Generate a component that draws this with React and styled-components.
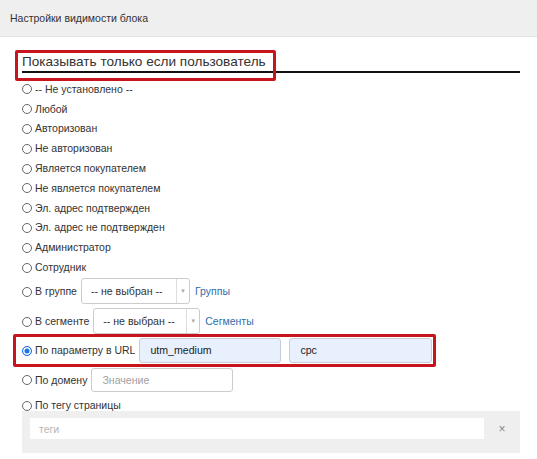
import React from "react";
import styled, { createGlobalStyle } from "styled-components";

const GlobalStyle = createGlobalStyle`
  html, body {
    margin: 0;
    padding: 0;
    background: #ffffff;
    font-family: "Liberation Sans", Arial, sans-serif;
    color: #333333;
  }
`;

const Panel = styled.div`
  width: 537px;
  height: 459px;
  overflow: hidden;
  background: #ffffff;
`;

const Header = styled.div`
  height: 36px;
  display: flex;
  align-items: center;
  padding-left: 10px;
  font-size: 10.5px;
  color: #333;
  background: #efefef;
  border-bottom: 1px solid #e4e4e4;
`;

const Body = styled.div`
  padding: 15px 17px 0 22px;
`;

const Heading = styled.div`
  display: flex;
  height: 19px;
  border-bottom: 2px solid #111;
  font-size: 13.6px;
  line-height: 19px;
  color: #333;
`;

const Marked = styled.span`
  position: relative;
  &::after {
    content: "";
    position: absolute;
    left: -7px;
    right: -10px;
    top: -2px;
    bottom: -10px;
    border: 3px solid #c8151d;
    border-radius: 2px;
    pointer-events: none;
  }
`;

const List = styled.div`
  display: flex;
  flex-direction: column;
  margin-top: 6px;
`;

const Option = styled.label`
  display: flex;
  align-items: ${(p) => p.$align || "center"};
  gap: 3px;
  height: ${(p) => p.$h || 19.8}px;
  font-size: 10.5px;
  color: #333;
  white-space: nowrap;
`;

const Radio = styled.span`
  box-sizing: border-box;
  width: 10px;
  height: 10px;
  border-radius: 50%;
  flex: none;
  border: 1px solid ${(p) => (p.$checked ? "#1a73e8" : "#666")};
  background: ${(p) => (p.$checked ? "#1a73e8" : "#fff")};
  box-shadow: ${(p) => (p.$checked ? "inset 0 0 0 1.5px #fff" : "none")};
  margin-top: 1px;
`;

const SelectRow = styled(Option)`
  height: 29px;
  align-items: flex-start;
  padding-top: 1px;
  & > span:first-child { margin-top: 9px; }
  & > span:nth-child(2) { margin-top: 7px; }
`;

const Select = styled.div`
  box-sizing: border-box;
  width: ${(p) => p.$w}px;
  height: 26px;
  margin-left: 1px;
  display: flex;
  align-items: stretch;
  border: 1px solid #cccccc;
  border-radius: 3px;
  background: #fff;
  font-size: 10.6px;
  color: #333;
`;

const SelectValue = styled.div`
  flex: 1;
  display: flex;
  align-items: center;
  padding-left: 9px;
`;

const SelectArrow = styled.div`
  width: 12px;
  border-left: 1px solid #dddddd;
  display: flex;
  align-items: center;
  justify-content: center;
  color: #aaa;
  font-size: 6px;
`;

const Link = styled.a`
  color: #2f6eac;
  text-decoration: none;
  font-size: 10.5px;
  margin-left: 2px;
  margin-top: 7px;
`;

const Highlight = styled.div`
  display: inline-flex;
  align-self: flex-start;
  align-items: center;
  gap: 3px;
  margin-left: -9px;
  margin-top: -3px;
  padding: 1px 1px 1px 6px;
  border: 3px solid #c8151d;
  border-radius: 2px;
  font-size: 10.5px;
  white-space: nowrap;
`;

const Field = styled.div`
  box-sizing: border-box;
  width: ${(p) => p.$w}px;
  height: ${(p) => p.$h || 25}px;
  margin-left: ${(p) => p.$ml || 0}px;
  display: flex;
  align-items: center;
  padding-left: 10px;
  border: 1px solid ${(p) => (p.$filled ? "#c5ccd6" : "#cccccc")};
  border-radius: 3px;
  background: ${(p) => (p.$filled ? "#e8f0fe" : "#fff")};
  color: ${(p) => (p.$filled ? "#222" : "#a0a0a0")};
  font-size: 10.6px;
`;

const TagBox = styled.div`
  display: flex;
  align-items: center;
  height: 42px;
  padding: 0 8px;
  gap: 8px;
  background: #efefef;
`;

const TagInput = styled.div`
  flex: 1;
  height: 21px;
  margin-top: -6px;
  display: flex;
  align-items: center;
  padding-left: 9px;
  background: #fff;
  color: #b5b5b5;
  font-size: 10.5px;
`;

const Clear = styled.span`
  width: 20px;
  margin-top: -6px;
  color: #888;
  font-size: 12px;
  text-align: center;
`;

const simple = [
  "-- Не установлено --",
  "Любой",
  "Авторизован",
  "Не авторизован",
  "Является покупателем",
  "Не является покупателем",
  "Эл. адрес подтвержден",
  "Эл. адрес не подтвержден",
  "Администратор",
  "Сотрудник",
];

export default function App() {
  return (
    <>
      <GlobalStyle />
      <Panel>
        <Header>Настройки видимости блока</Header>
        <Body>
          <Heading>
            <Marked>Показывать только если пользователь</Marked>
          </Heading>
          <List>
            {simple.map((t) => (
              <Option key={t}>
                <Radio />
                {t}
              </Option>
            ))}
            <SelectRow>
              <Radio />
              <span>В группе</span>
              <Select $w={109}>
                <SelectValue>-- не выбран --</SelectValue>
                <SelectArrow>▼</SelectArrow>
              </Select>
              <Link>Группы</Link>
            </SelectRow>
            <SelectRow>
              <Radio />
              <span>В сегменте</span>
              <Select $w={107}>
                <SelectValue>-- не выбран --</SelectValue>
                <SelectArrow>▼</SelectArrow>
              </Select>
              <Link>Сегменты</Link>
            </SelectRow>
            <Highlight>
              <Radio $checked />
              По параметру в URL
              <Field $w={142} $filled $ml={1}>utm_medium</Field>
              <Field $w={143} $filled $ml={5}>cpc</Field>
            </Highlight>
            <Option $h={26}>
              <Radio />
              По домену
              <Field $w={142} $h={24} $ml={1}>Значение</Field>
            </Option>
            <Option $h={18} $align="flex-end">
              <Radio />
              По тегу страницы
            </Option>
            <TagBox>
              <TagInput>теги</TagInput>
              <Clear>×</Clear>
            </TagBox>
          </List>
        </Body>
      </Panel>
    </>
  );
}
